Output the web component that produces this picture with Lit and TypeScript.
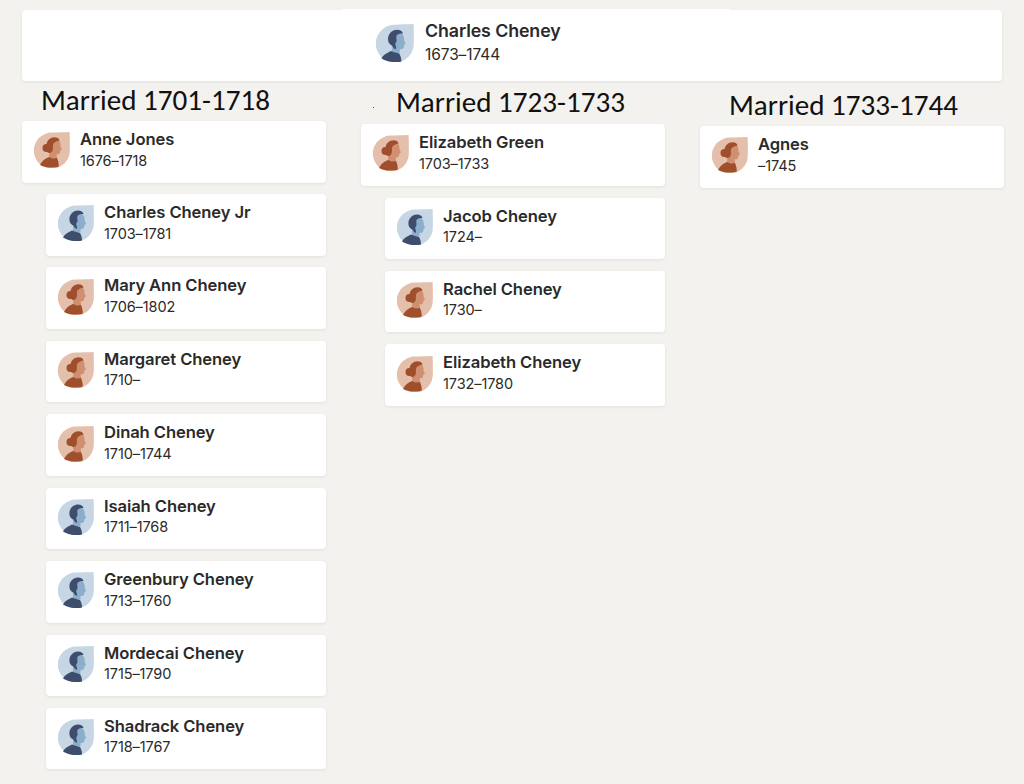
import { LitElement, html, css, svg } from "lit";
import { customElement } from "lit/decorators.js";

type P = { n: string; y: string; g: "m" | "f" };

const columns: { title: string; spouse: P; kids: P[]; cls: string }[] = [
  {
    title: "Married 1701-1718",
    cls: "c1",
    spouse: { n: "Anne Jones", y: "1676–1718", g: "f" },
    kids: [
      { n: "Charles Cheney Jr", y: "1703–1781", g: "m" },
      { n: "Mary Ann Cheney", y: "1706–1802", g: "f" },
      { n: "Margaret Cheney", y: "1710–", g: "f" },
      { n: "Dinah Cheney", y: "1710–1744", g: "f" },
      { n: "Isaiah Cheney", y: "1711–1768", g: "m" },
      { n: "Greenbury Cheney", y: "1713–1760", g: "m" },
      { n: "Mordecai Cheney", y: "1715–1790", g: "m" },
      { n: "Shadrack Cheney", y: "1718–1767", g: "m" },
    ],
  },
  {
    title: "Married 1723-1733",
    cls: "c2",
    spouse: { n: "Elizabeth Green", y: "1703–1733", g: "f" },
    kids: [
      { n: "Jacob Cheney", y: "1724–", g: "m" },
      { n: "Rachel Cheney", y: "1730–", g: "f" },
      { n: "Elizabeth Cheney", y: "1732–1780", g: "f" },
    ],
  },
  {
    title: "Married 1733-1744",
    cls: "c3",
    spouse: { n: "Agnes", y: "–1745", g: "f" },
    kids: [],
  },
];

const male = svg`
  <path class="mbg" d="M18 .6C23 .4 30 .2 35.6 0c.2 6 .4 12 .2 18A18 18 0 1 1 18 .6Z"/>
  <path class="mface" d="M15 8h8c3 1.500 4 5 3.800 8l1.400 3-1.600.7c0 3-1 4.500-4 4.300l-.2 3.500-7.400 0Z"/>
  <path class="mdark" d="M5 32.500c1.500-3.200 5-4.800 9-7l2.500 1 5.500 1.500 1 2c.8 2 1 3.800 1 5.500-4 1.300-13 1-19-3Z"/>
  <path class="mdark" d="M11.500 15.500c-.8-5.500 3.500-10 8.500-10 3 0 5 1.200 5.500 3.500-3 0-5.700.5-6.200 2.500-.3 1.500.4 3 .2 4.500-.3 1.500-1.500 2-1.300 3.500.3 1.500 1.500 2.500.5 4.500-1.700-.7-2.500-2-3-3.200-2-1-4.200-2.700-4.200-5.300Z"/>`;

const female = svg`
  <path class="fbg" d="M18 .6C23 .4 30 .2 35.600 0c.2 6 .4 12 .2 18A18 18 0 1 1 18 .6Z"/>
  <path class="fface" d="M16 7h7.500c2.300 1.600 3.300 4.500 3 7.500l1.500 3-1.700.9c0 2.800-1.100 4.200-3.600 3.900l.3 4-8 1Z"/>
  <path class="fdark" d="M6 33c1.800-3.800 4.500-6 9-8l3.500 1.500 4.500-.5c1.200 2.600 1.800 5.500 1.800 8.500-4.300 1.600-12.800 1.500-18.800-1.500Z"/>
  <circle class="fdark" cx="12.500" cy="16" r="4"/>
  <path class="fdark" d="M12.500 13c0-4.500 4-7.800 8-7.800 2.500 0 4.500 1 5 3.300-3 .5-6 2-6.500 4-.5 2 .5 3.500-.5 6-.5 1.500-1.500 2.500-3 2.500-2 0-3-1.500-3-3.500Z"/>`;

@customElement("person-card")
class PersonCard extends LitElement {
  static properties = { p: { attribute: false }, big: { type: Boolean, reflect: true } };
  p!: P;
  big = false;
  static styles = css`
    :host {
      display: flex;
      align-items: center;
      box-sizing: border-box;
      background: #fff;
      border-radius: 4px;
      box-shadow: 0 1px 3px rgba(60, 50, 40, 0.09);
      padding: 0 0 3px 12px;
      gap: 10px;
      height: 61.5px;
      font-family: Inter, "Liberation Sans", sans-serif;
      color: #2b2a29;
    }
    :host([big]) {
      height: 72px;
      padding: 0 0 5px 36px;
      gap: 11px;
      box-shadow: none;
    }
    svg {
      width: 36px;
      height: 36px;
      flex: none;
    }
    :host([big]) svg {
      width: 38px;
      height: 38px;
    }
    .text {
      display: flex;
      flex-direction: column;
      gap: 1.500px;
      padding-bottom: 1px;
    }
    .name {
      font-size: 16.6px;
      font-weight: 600;
      line-height: 20px;
      letter-spacing: -0.1px;
    }
    .yrs {
      font-size: 14.500px;
      line-height: 20px;
      letter-spacing: -0.1px;
    }
    :host([big]) .text {
      gap: 2px;
      padding-bottom: 0;
    }
    :host([big]) .name {
      font-size: 17.800px;
      line-height: 22px;
    }
    :host([big]) .yrs {
      font-size: 15.500px;
      line-height: 22px;
      letter-spacing: -0.1px;
    }
    .mbg { fill: #c6d6e4; }
    .mface { fill: #8aaecb; }
    .mdark { fill: #3e4d6c; }
    .fbg { fill: #e4bfab; }
    .fface { fill: #cf8f70; }
    .fdark { fill: #9f4f2b; }
  `;
  render() {
    return html`
      <svg viewBox="0 0 36 36">${this.p.g === "m" ? male : female}</svg>
      <div class="text">
        <div class="name">${this.p.n}</div>
        <div class="yrs">${this.p.y}</div>
      </div>
    `;
  }
}

@customElement("app-root")
export class AppRoot extends LitElement {
  static styles = css`
    :host {
      display: block;
      width: 1024px;
      height: 784px;
      box-sizing: border-box;
      background: #f3f2ef;
      padding: 10px 22px 0 22px;
      overflow: hidden;
    }
    .top {
      height: 71px;
      background: #fff;
      border-radius: 4px;
      box-shadow: 0 1px 3px rgba(60, 50, 40, 0.09);
      display: flex;
      justify-content: center;
      padding-left: 48px;
      box-sizing: border-box;
    }
    .top person-card {
      width: 392px;
      margin-top: -1px;
    }
    .cols {
      display: grid;
      grid-template-columns: 304px 304px 304px;
      column-gap: 35px;
    }
    .col {
      display: flex;
      flex-direction: column;
    }
    .c1 { padding-top: 4px; }
    .c2 { padding-top: 6px; }
    .c3 { padding-top: 9px; }
    h2 {
      position: relative;
      margin: 0 0 5px 19px;
      height: 31px;
      font-family: Carlito, "Open Sans", "Noto Sans", sans-serif;
      font-weight: 400;
      font-size: 29.100px;
      line-height: 31px;
      color: #111;
      white-space: nowrap;
    }
    .c2 h2 { margin: 0 0 6px 35px; }
    .c2 h2::before {
      content: "";
      position: absolute;
      left: -23px;
      top: 20px;
      width: 1px;
      height: 1px;
      background: #555;
    }
    .c3 h2 { margin-left: 29px; }
    .kids {
      display: flex;
      flex-direction: column;
      gap: 11.930px;
      margin: 11.500px 0 0 24px;
    }
    .c2 .kids { margin-top: 12px; }
  `;
  render() {
    return html`
      <div class="top">
        <person-card big .p=${{ n: "Charles Cheney", y: "1673–1744", g: "m" }}></person-card>
      </div>
      <div class="cols">
        ${columns.map(
          (c) => html`
            <div class="col ${c.cls}">
              <h2>${c.title}</h2>
              <person-card .p=${c.spouse}></person-card>
              <div class="kids">
                ${c.kids.map((k) => html`<person-card .p=${k}></person-card>`)}
              </div>
            </div>
          `
        )}
      </div>
    `;
  }
}
